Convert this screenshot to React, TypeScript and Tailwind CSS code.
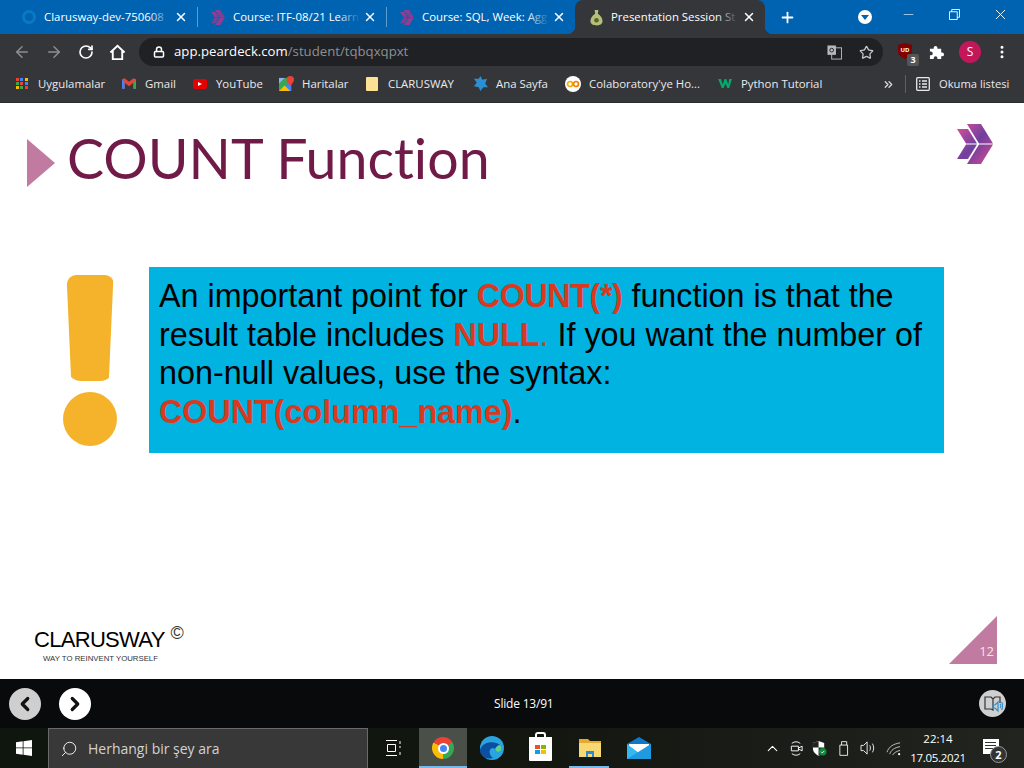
import { ArrowLeft, ArrowRight, ChevronLeft, ChevronRight, ChevronUp, ChevronsRight, EllipsisVertical, Lock, Minus, Plus, RotateCw, Search, Star, X } from "lucide-react";

const UI = "font-['Open_Sans','Noto_Sans',sans-serif]";

function Chevrons({ className, id, muted }: { className?: string; id: string; muted?: boolean }) {
  return (
    <svg viewBox="0 0 36 40" className={className}>
      <defs>
        <linearGradient id={id} x1="0" y1="0" x2="1" y2="1">
          <stop offset="0" stopColor={muted ? "#a3418d" : "#e0509a"} />
          <stop offset="0.5" stopColor={muted ? "#7b3f98" : "#6f3f9f"} />
          <stop offset="1" stopColor={muted ? "#a3418d" : "#d94a90"} />
        </linearGradient>
      </defs>
      <path d="M0 5h11l9 14.500H9zM9 20.500h11L11 35H0zM10 0h14l12 19.500H22zM22 20.500h14L24 40H10z" fill={`url(#${id})`} />
    </svg>
  );
}

function PearIcon() {
  return (
    <svg viewBox="0 0 14 18" className="w-[13px] h-[17px] shrink-0">
      <path d="M5 1h4L8.500 5c3 2 5 5 5 8 0 3-3 4.500-6.500 4.500S.5 16 .5 13c0-3 2-6 5-8z" fill="#b5bf7a" />
      <circle cx="7" cy="12" r="2.500" fill="#5a6628" />
    </svg>
  );
}

function Tab({ title, icon, active }: { title: string; icon: React.ReactNode; active?: boolean }) {
  const fade = active ? "from-transparent to-[#35363a]" : "from-transparent to-[#0063b1]";
  return (
    <div className={`relative shrink-0 flex items-center pr-[8px] ${active ? "w-[190px] -ml-px pl-[12px] h-[34px] bg-[#35363a] rounded-t-[8px]" : "w-[189px] pl-[11px] h-[20px] border-r border-[#5d9ccf]"}`}>
      {active && <span className="absolute left-[-8px] bottom-0 w-[8px] h-[8px] bg-[radial-gradient(circle_at_0_0,#0063b1_8px,#35363a_8.500px)]" />}
      {active && <span className="absolute right-[-8px] bottom-0 w-[8px] h-[8px] bg-[radial-gradient(circle_at_100%_0,#0063b1_8px,#35363a_8.500px)]" />}
      <span className="w-[18px] flex justify-center shrink-0">{icon}</span>
      <div className="relative ml-[6px] w-[127px] overflow-hidden whitespace-nowrap text-[11.400px] text-white">
        {title}
        <div className={`absolute right-0 top-0 bottom-0 w-[22px] bg-gradient-to-r ${fade}`} />
      </div>
      <X size={14} strokeWidth={2.5} className="text-white ml-auto mr-px" />
    </div>
  );
}

function TabStrip() {
  return (
    <div className="h-[34px] bg-[#0063b1] flex items-center pl-[9px]">
      <Tab title="Clarusway-dev-750608" icon={<span className="block w-[14px] h-[14px] rounded-full border-[3px] border-[#0a79c4]" />} />
      <Tab title="Course: ITF-08/21 Learn" icon={<Chevrons muted id="t1" className="w-[14px] h-[15px]" />} />
      <Tab title="Course: SQL, Week: Agg" icon={<Chevrons muted id="t2" className="w-[14px] h-[15px]" />} />
      <Tab active title="Presentation Session St" icon={<PearIcon />} />
      <Plus size={17} strokeWidth={2.5} className="text-white ml-[14px]" />
      <span className="ml-[62px] w-[14px] h-[14px] rounded-full bg-white flex items-center justify-center">
        <span className="border-x-[4px] border-t-[5px] border-x-transparent border-t-[#0063b1]" />
      </span>
      <Minus size={15} strokeWidth={1} className="text-white ml-[29px] mb-[6px]" />
      <svg viewBox="0 0 12 12" className="w-[11px] h-[11px] ml-[33px] mb-[6px]" fill="none" stroke="white">
        <path d="M.5 3h8.500v8.500H.5zM3 3V.5h8.500V9H9" />
      </svg>
      <X size={17} strokeWidth={1.3} className="text-white ml-[32px] mb-[6px]" />
    </div>
  );
}

function Toolbar() {
  return (
    <div className="h-[36px] bg-[#35363a] flex items-center pl-[13px]">
      <ArrowLeft size={18} className="text-[#8d8e90]" />
      <ArrowRight size={18} className="text-[#8d8e90] ml-[14px]" />
      <RotateCw size={16} strokeWidth={2.5} className="text-white ml-[15px]" />
      <svg viewBox="0 0 18 18" className="w-[17px] h-[17px] ml-[15px]" fill="none" stroke="white" strokeWidth="2">
        <path d="M1.500 9 9 2l7.500 7M4 7.500V16h10V7.500" />
      </svg>
      <div className="ml-[13px] w-[744px] h-[28px] rounded-full bg-[#202124] flex items-center pl-[14px] pr-[9px] text-[13.200px]">
        <Lock size={12} strokeWidth={3} className="text-white" />
        <span className="ml-[9px] text-white">app.peardeck.com</span>
        <span className="text-[#8f9093]">/student/tqbqxqpxt</span>
        <svg viewBox="0 0 16 16" className="w-[15px] h-[15px] ml-auto" fill="none">
          <rect x="5" y="3" width="10.500" height="12" stroke="#b9babb" />
          <rect x=".5" y=".5" width="9" height="10" fill="#b9babb" />
          <circle cx="5" cy="5.500" r="2" stroke="#202124" />
        </svg>
        <Star size={15} strokeWidth={2} className="text-[#c8c9ca] ml-[17px]" />
      </div>
      <div className="relative ml-[15px] w-[16px] h-[18px]">
        <svg viewBox="0 0 14 16" className="w-[14px] h-[16px]">
          <path d="M0 2 7 0l7 2v6c0 4-3 6-7 8-4-2-7-4-7-8z" fill="#800000" />
          <text x="7" y="8.500" textAnchor="middle" fontSize="6" fontWeight="700" fill="white">UD</text>
        </svg>
        <span className="absolute left-[9px] top-[11px] w-[12px] h-[12px] bg-[#555] rounded-[2px] text-white text-[9px] leading-[12px] text-center font-bold">3</span>
      </div>
      <svg viewBox="0 0 16 16" className="w-[15px] h-[15px] ml-[15px]" fill="white">
        <path d="M1 4h4V3a2 2 0 0 1 4 0v1h4v4h1a2 2 0 0 1 0 4h-1v3H9v-1a2 2 0 0 0-4 0v1H1v-4h1a2 2 0 0 0 0-4H1z" />
      </svg>
      <span className="ml-[15px] w-[22px] h-[22px] rounded-full bg-[#c2185b] text-white text-[12px] flex items-center justify-center">S</span>
      <EllipsisVertical size={16} strokeWidth={2.5} className="text-white ml-[13px]" />
    </div>
  );
}

function Bookmark({ icon, label, w }: { icon: React.ReactNode; label: string; w: string }) {
  return (
    <div className={`flex items-center shrink-0 ${w}`}>
      <span className="w-[16px] h-[16px] flex items-center justify-center shrink-0">{icon}</span>
      <span className="ml-[8px] text-[11.400px] text-[#e8eaed] whitespace-nowrap">{label}</span>
    </div>
  );
}

function Bookmarks() {
  const dots = ["#ea4335", "#4285f4", "#fbbc05", "#34a853", "#ea4335", "#4285f4", "#fbbc05", "#34a853", "#ea4335"];
  return (
    <div className="h-[33px] bg-[#35363a] border-b border-[#2a2b2e] flex items-center pl-[14px] pb-[4px]">
      <Bookmark w="w-[107px]" label="Uygulamalar" icon={
        <span className="grid grid-cols-3 gap-[1px] w-[13px]">
          {dots.map((c, i) => <span key={i} className="w-[3px] h-[3px]" style={{ background: c }} />)}
        </span>
      } />
      <Bookmark w="w-[71px]" label="Gmail" icon={
        <svg viewBox="0 0 16 12" className="w-[14px] h-[11px]"><path d="M0 1v11h3V5l5 4 5-4v7h3V1l-3-1-5 4-5-4z" fill="#ea4335" /><path d="M0 1v11h3V5z" fill="#4285f4" /><path d="M13 5v7h3V1z" fill="#34a853" /></svg>
      } />
      <Bookmark w="w-[86px]" label="YouTube" icon={
        <span className="w-[14px] h-[10px] bg-[#e60000] rounded-[2px] flex items-center justify-center"><span className="border-y-[2.5px] border-l-[4px] border-y-transparent border-l-white" /></span>
      } />
      <Bookmark w="w-[86px]" label="Haritalar" icon={
        <svg viewBox="0 0 16 16" className="w-[15px] h-[15px]"><path d="M0 2h13v14H0z" fill="#34a853" /><path d="M0 16 13 5v11z" fill="#4285f4" /><path d="M0 16l6-6 6 6z" fill="#fbbc05" /><path d="M0 2h6L0 8z" fill="#8ab4f8" /><path d="M12 0a4 4 0 0 1 4 4c0 2-2 4-4 7-2-3-4-5-4-7a4 4 0 0 1 4-4z" fill="#ea4335" /></svg>
      } />
      <Bookmark w="w-[108px]" label="CLARUSWAY" icon={<span className="w-[12px] h-[14px] bg-[#fde293] rounded-[1px]" />} />
      <Bookmark w="w-[93px]" label="Ana Sayfa" icon={
        <svg viewBox="0 0 16 16" className="w-[15px] h-[15px]" fill="#2b8fd4"><path d="M8 0l2 4 5-1-2 5 3 4-5 0-3 4-2-4-5-1 3-4-3-4 5 0z" /></svg>
      } />
      <Bookmark w="w-[152px]" label="Colaboratory'ye Ho..." icon={
        <svg viewBox="0 0 16 16" className="w-[16px] h-[16px]" fill="none">
          <circle cx="8" cy="8" r="8" fill="white" />
          <circle cx="5" cy="8" r="2.500" stroke="#f9ab00" strokeWidth="1.700" />
          <circle cx="11" cy="8" r="2.500" stroke="#f57c00" strokeWidth="1.700" />
        </svg>
      } />
      <Bookmark w="w-[118px]" label="Python Tutorial" icon={
        <svg viewBox="0 0 16 12" className="w-[15px] h-[11px]" fill="#04aa6d"><path d="M0 1h3l2 6 2-6h2l2 6 1-6h3l-3 10h-2L8 6l-2 5H4z" /></svg>
      } />
      <ChevronsRight size={13} strokeWidth={2.5} className="text-[#d5d6d7] ml-[47px]" />
      <span className="w-px h-[18px] bg-[#5f6064] ml-[10px]" />
      <svg viewBox="0 0 14 14" className="w-[14px] h-[14px] ml-[10px]" fill="none" stroke="#e8eaed" strokeWidth="1.300">
        <rect x=".7" y=".7" width="12.600" height="12.600" rx="1" />
        <path d="M3 4h1.500M6 4h5M3 7h1.500M6 7h5M3 10h1.500M6 10h5" />
      </svg>
      <span className="ml-[9px] text-[11.200px] text-[#e8eaed] whitespace-nowrap">Okuma listesi</span>
    </div>
  );
}

function Slide() {
  return (
    <div className="h-[576px] bg-white flex flex-col">
      <div className="flex items-start pl-[27px] pt-[19px] h-[164px]">
        <span className="mt-[17px] border-y-[24.500px] border-l-[28px] border-y-transparent border-l-[#c17ba0]" />
        <h1 className="ml-[12px] text-[55.500px] leading-[72px] text-[#6f1a47] font-['Lato',sans-serif] [font-variant-ligatures:none] whitespace-nowrap">COUNT Function</h1>
        <Chevrons id="logo" className="ml-auto mr-[31px] mt-[2px] w-[36px] h-[40px]" />
      </div>
      <div className="flex items-start pl-[63px]">
        <div className="w-[54px] flex flex-col items-center pt-[8px] shrink-0">
          <span className="block w-[47px] h-[106px] bg-[#f5b22b] rounded-t-[9px] rounded-b-[14px] [clip-path:polygon(0_0,100%_0,90%_100%,10%_100%)]" />
          <span className="block mt-[11px] w-[54px] h-[54px] rounded-full bg-[#f5b22b]" />
        </div>
        <div className="ml-[32px] w-[795px] h-[186px] bg-[#00b3e0] pl-[10px] pt-[10px] font-['Liberation_Sans',Arial,sans-serif] text-[32.300px] leading-[38.500px] text-black">
          <div className="whitespace-nowrap">An important point for <b className="text-[#d93a1f] tracking-[-0.4px]">COUNT(*)</b> function is that the</div>
          <div className="whitespace-nowrap">result table includes <b className="text-[#d93a1f]">NULL</b><span className="text-[#d93a1f]">.</span> If you want the number of</div>
          <div className="whitespace-nowrap">non-null values, use the syntax:</div>
          <div className="whitespace-nowrap"><b className="text-[#d93a1f]">COUNT(column_name)</b>.</div>
        </div>
      </div>
      <div className="mt-auto flex items-end justify-between pl-[34px] pr-[27px] pb-[15px]">
        <div className="font-['Liberation_Sans',Arial,sans-serif] text-black">
          <div className="flex items-start leading-none">
            <span className="mt-[3px] text-[22px] leading-[22px] tracking-[-0.7px]">CLARUSWAY</span>
            <span className="ml-[6px] text-[18px] leading-[14px] text-[#333]">©</span>
          </div>
          <div className="ml-[9px] mt-[3px] text-[7.800px] leading-[10px] text-[#333] whitespace-nowrap">WAY TO REINVENT YOURSELF</div>
        </div>
        <div className="w-[48px] h-[48px] bg-[#c17ba0] [clip-path:polygon(100%_0,100%_100%,0_100%)] flex items-end justify-end pr-[3px] pb-[5px] text-[#f2e4ec] text-[13px] leading-[16px]">12</div>
      </div>
    </div>
  );
}

function SlideNav() {
  return (
    <div className="h-[49px] bg-[#090a0b] flex items-center pl-[9px] pr-[18px]">
      <span className="w-[32px] h-[32px] rounded-full bg-[#cfcfcf] flex items-center justify-center">
        <ChevronLeft size={22} strokeWidth={3.500} className="text-[#111]" />
      </span>
      <span className="ml-[18px] w-[32px] h-[32px] rounded-full bg-white flex items-center justify-center">
        <ChevronRight size={22} strokeWidth={3.500} className="text-[#111]" />
      </span>
      <span className="ml-[403px] text-[12px] text-white tracking-[-0.2px]">Slide 13/91</span>
      <span className="ml-auto w-[27px] h-[27px] rounded-full bg-[#cfcfcf] flex items-center justify-center">
        <svg viewBox="0 0 20 18" className="w-[20px] h-[18px]" fill="none">
          <path d="M2 2h6l2 2v11l-2-1H2zM10 4l2-2h5v6" stroke="#333" strokeWidth="1.200" />
          <path d="M10 10h2l3-3v9l-3-3h-2z" stroke="#2f8fd0" strokeWidth="1.200" />
          <path d="M17 9c1 1 1 3 0 4M18.500 7c1.500 2 1.500 6 0 8" stroke="#2f8fd0" strokeWidth="1.200" />
        </svg>
      </span>
    </div>
  );
}

function TaskbarApp({ active, line, w = "w-[49px]", children }: { active?: boolean; line?: string; w?: string; children: React.ReactNode }) {
  return (
    <div className={`relative h-[40px] flex items-center justify-center shrink-0 ${w} ${active ? "bg-[#4a4f47]" : ""}`}>
      {children}
      {line && <span className={`absolute bottom-0 h-[2px] bg-[#76b9ed] ${line}`} />}
    </div>
  );
}

function Taskbar() {
  return (
    <div className="h-[40px] bg-gradient-to-r from-[#0f160d] via-[#12160f] to-[#22241f] flex items-center">
      <div className="w-[48px] flex justify-center shrink-0">
        <svg viewBox="0 0 16 16" className="w-[16px] h-[16px]" fill="white">
          <path d="M0 2.300 6.700 1.300v6.200H0zM7.500 1.200 16 0v7.500H7.500zM0 8.300h6.700v6.400L0 13.700zM7.500 8.300H16V16l-8.500-1.200z" />
        </svg>
      </div>
      <div className="w-[320px] h-[40px] bg-[#383838] border border-[#6a6a6a] border-b-0 flex items-center pl-[11px] shrink-0">
        <Search size={18} strokeWidth={1.200} className="text-white -scale-x-100" />
        <span className="ml-[10px] text-[14px] text-[#d2d2d2] whitespace-nowrap">Herhangi bir şey ara</span>
      </div>
      <TaskbarApp w="w-[51px]">
        <svg viewBox="0 0 16 16" className="w-[16px] h-[16px]" fill="none" stroke="white">
          <path d="M0 .5h11M0 15.500h11M1.500 4.500h8v7h-8zM14 1v3M14 6v2M14 12v3" />
        </svg>
      </TaskbarApp>
      <TaskbarApp active line="left-0 right-0" w="w-[48px]">
        <span className="w-[22px] h-[22px] rounded-full bg-[conic-gradient(from_-60deg,#ea4335_0_33%,#34a853_33%_66%,#fbbc05_66%_100%)] flex items-center justify-center">
          <span className="w-[11px] h-[11px] rounded-full bg-[#4285f4] border-2 border-white" />
        </span>
      </TaskbarApp>
      <TaskbarApp>
        <svg viewBox="0 0 24 24" className="w-[24px] h-[24px]">
          <circle cx="12" cy="12" r="12" fill="#2aa4e0" />
          <path d="M0 14C2 6 14 4 20 9c3 3 2 7-2 7-3 0-1-3-5-4-4 0-5 6 0 10C6 24 0 20 0 14z" fill="#0c4fa0" />
          <path d="M20 9c3 3 2 7-2 7-2 0-2-2-3-3 1-2 3-4 5-4z" fill="#5fd18c" />
        </svg>
      </TaskbarApp>
      <TaskbarApp>
        <div className="relative w-[23px] h-[24px] bg-white mt-[2px] rounded-b-[1px] grid grid-cols-2 gap-[1px] content-center justify-center px-[6px]">
          <span className="absolute left-[6px] top-[-5px] w-[11px] h-[7px] border-2 border-b-0 border-white rounded-t-[3px]" />
          <span className="h-[4px] bg-[#f25022]" />
          <span className="h-[4px] bg-[#7fba00]" />
          <span className="h-[4px] bg-[#00a4ef]" />
          <span className="h-[4px] bg-[#ffb900]" />
        </div>
      </TaskbarApp>
      <TaskbarApp line="left-[4px] right-[5px]">
        <svg viewBox="0 0 22 18" className="w-[22px] h-[18px]">
          <path d="M0 0h9l2 2h11v16H0z" fill="#e8a92f" />
          <path d="M0 4h22v14H0z" fill="#f8d775" />
          <path d="M7 18v-6h8v6h-2v-3H9v3z" fill="#2f8ad0" />
        </svg>
      </TaskbarApp>
      <TaskbarApp>
        <svg viewBox="0 0 24 22" className="w-[24px] h-[22px]">
          <path d="M0 7 12 0l12 7v15H0z" fill="#0f78c9" />
          <path d="M2 7h20v8l-10 5-10-5z" fill="#fff" />
          <path d="M0 7l12 9 12-9v15H0z" fill="#35b8f1" />
          <path d="M24 7v15H0z" fill="#1e9be0" />
        </svg>
      </TaskbarApp>
      <ChevronUp size={17} strokeWidth={1.500} className="text-white ml-[101px] shrink-0" />
      <svg viewBox="0 0 16 16" className="w-[15px] h-[15px] ml-[8px] shrink-0" fill="none" stroke="white">
        <path d="M3 2.500a7.500 7.500 0 0 1 9 0M3 13.500a7.500 7.500 0 0 0 9 0M2.500 5.500h7.500v5H2.500zM10 7.500l4-2v5l-4-2" />
      </svg>
      <svg viewBox="0 0 16 16" className="w-[15px] h-[15px] ml-[8px] shrink-0">
        <path d="M1 2 7 0l6 2v6c0 4-3 6-6 8-3-2-6-4-6-8z" fill="white" />
        <path d="M7 0v7H1V2zM7 7h6v1c0 3-2 5-6 8z" fill="#222" />
        <circle cx="11.500" cy="11.500" r="4" fill="#10893e" />
        <path d="M9.800 11.500l1.200 1.200 2-2" fill="none" stroke="white" />
      </svg>
      <svg viewBox="0 0 14 18" className="w-[12px] h-[17px] ml-[12px] shrink-0" fill="none" stroke="white">
        <path d="M3 5V1h6v4M1 5h9v12H1z" />
      </svg>
      <svg viewBox="0 0 18 16" className="w-[16px] h-[14px] ml-[9px] shrink-0" fill="none" stroke="white">
        <path d="M1 5h3l4-4v14l-4-4H1zM11 5c1 2 1 4 0 6M14 3c2 3 2 7 0 10" />
      </svg>
      <svg viewBox="0 0 16 16" className="w-[15px] h-[15px] ml-[10px] shrink-0" fill="none" stroke="#c8c8c8">
        <path d="M1 12C3 6 8 3 15 2M4 14c1-4 5-7 11-8M7 15c1-2 4-4 8-5" />
        <circle cx="14" cy="14" r="1.200" fill="white" stroke="none" />
      </svg>
      <div className="ml-[9px] w-[56px] shrink-0 text-center text-[11.500px] leading-[19px] text-white whitespace-nowrap">
        <div>22:14</div>
        <div className="tracking-[-0.3px]">17.05.2021</div>
      </div>
      <div className="relative ml-[17px] w-[16px] h-[15px] bg-white shrink-0 mb-[4px]">
        <span className="absolute left-[2px] top-[3px] w-[11px] h-[1px] bg-[#333]" />
        <span className="absolute left-[2px] top-[6px] w-[11px] h-[1px] bg-[#333]" />
        <span className="absolute left-[2px] top-[9px] w-[8px] h-[1px] bg-[#333]" />
        <span className="absolute left-[7px] top-[7px] w-[17px] h-[17px] rounded-full bg-[#333] border border-[#999] text-white text-[11px] leading-[15px] text-center font-bold">2</span>
      </div>
    </div>
  );
}

export default function App() {
  return (
    <div className={`w-[1024px] h-[768px] overflow-hidden flex flex-col ${UI}`}>
      <TabStrip />
      <Toolbar />
      <Bookmarks />
      <Slide />
      <SlideNav />
      <Taskbar />
    </div>
  );
}
